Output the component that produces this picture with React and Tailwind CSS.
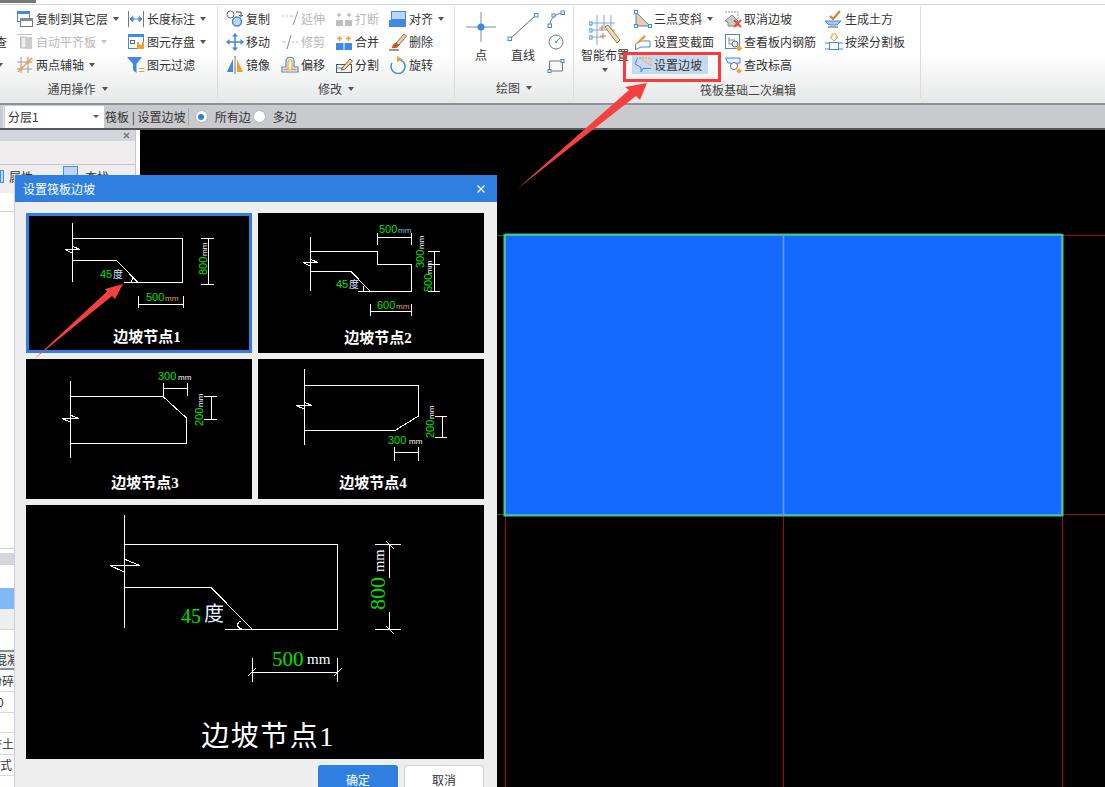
const cn = "font-['Noto_Sans_CJK_SC',sans-serif]";
const blue = "#3f8ae0";
const orange = "#f0a033";
const gray = "#bdbdbd";

const Caret = ({ light }) => (
  <span
    className={`ml-[5px] w-0 h-0 border-x-[3px] border-x-transparent border-t-[4px] ${
      light ? "border-t-[#c4c4c4]" : "border-t-[#555]"
    }`}
  />
);

const Ico = ({ children, w = 18, h = 18 }) => (
  <svg width={w} height={h} viewBox={`0 0 ${w} ${h}`} fill="none" className="shrink-0">
    {children}
  </svg>
);

const icons = {
  toLayer: (
    <Ico>
      <rect x="1.5" y="1.5" width="12" height="10" fill="#fff" stroke={blue} />
      <rect x="1" y="1" width="13" height="3" fill={blue} />
      <rect x="4.5" y="8.5" width="12" height="8" fill="#fff" stroke="#777" />
      <rect x="4" y="8" width="13" height="3" fill="#888" />
    </Ico>
  ),
  flush: (
    <Ico>
      <path d="M1 1.5h15M4.5 4v11M11 4v12" stroke={gray} />
      <rect x="5" y="4" width="5" height="11" fill="#eee" stroke={gray} />
      <rect x="11" y="4" width="5" height="12" fill="#ccc" />
    </Ico>
  ),
  axis: (
    <Ico>
      <path d="M1 6h15M1 13h15M5 1v16M12 1v16" stroke="#999" />
      <path d="M2 16 16 2" stroke={orange} strokeWidth="1.5" />
      <circle cx="5" cy="13" r="1.5" fill={orange} />
      <circle cx="12" cy="6" r="1.5" fill={orange} />
    </Ico>
  ),
  dim: (
    <Ico>
      <path d="M1.5 1v16M16.5 1v16" stroke="#777" />
      <path d="M3 9h12M3 9l3-2.5v5zM15 9l-3-2.5v5z" stroke={blue} fill={blue} />
    </Ico>
  ),
  save: (
    <Ico>
      <rect x="1.5" y="1.5" width="15" height="14" fill="#fff" stroke={blue} />
      <rect x="1" y="1" width="16" height="3" fill={blue} />
      <rect x="3.5" y="7.5" width="4" height="3" stroke="#666" />
      <rect x="10" y="9" width="7" height="7" fill={orange} />
      <rect x="12" y="9" width="3" height="2.5" fill="#fff" />
    </Ico>
  ),
  filter: (
    <Ico>
      <path d="M0 1h15L9.5 8v9L6 14V8z" fill={blue} />
      <path d="M12 12.5h5M12 15.5h5" stroke={orange} />
    </Ico>
  ),
  copy: (
    <Ico>
      <circle cx="4.5" cy="4.5" r="3.5" stroke="#666" />
      <circle cx="11" cy="11.5" r="4.5" fill="#bcd7f3" stroke={blue} strokeWidth="1.5" />
      <path d="M10 2h5v4M13 5l2 1.5L17 5" stroke="#444" />
    </Ico>
  ),
  move: (
    <Ico>
      <path d="M9 2v14M2 9h14" stroke={blue} strokeWidth="1.5" />
      <path d="M9 0l3 3.5H6zM9 18l3-3.5H6zM0 9l3.5-3v6zM18 9l-3.5-3v6z" fill={blue} />
    </Ico>
  ),
  mirror: (
    <Ico>
      <path d="M1 16 7 3v13z" fill={blue} />
      <path d="M11 3v13h6z" fill={orange} />
      <path d="M9 0v18" stroke="#777" />
    </Ico>
  ),
  extend: (
    <Ico>
      <path d="M1 6h2M5 6h2M9 6h3" stroke={gray} />
      <path d="M12 15 17 1" stroke="#999" />
    </Ico>
  ),
  trim: (
    <Ico>
      <path d="M1 9h4M11 9h2M15 9h2" stroke={gray} />
      <path d="M6 16 10 2" stroke="#888" />
    </Ico>
  ),
  offset: (
    <Ico>
      <path d="M1 16v-5h4V5c0-5 8-5 8 0v6h4v5z" fill="#fff" stroke={blue} strokeWidth="1.2" />
      <path d="M3 14v-1h4V6c0-3 4-3 4 0v7h4v1z" fill="#fdf2dc" stroke={orange} strokeWidth="1.2" />
    </Ico>
  ),
  breakIt: (
    <Ico>
      <rect x="1" y="10" width="7" height="6" fill={gray} />
      <rect x="10" y="10" width="7" height="6" fill={gray} />
      <path d="M4 3v4M2 5h4M14 3v4M12 5h4" stroke={gray} strokeWidth="1.5" />
    </Ico>
  ),
  merge: (
    <Ico>
      <rect x="1" y="10" width="16" height="7" fill={blue} />
      <path d="M9 10v7" stroke="#fff" />
      <path d="M4.5 3v5M2 5.5h5M13.5 3v5M11 5.5h5" stroke={orange} strokeWidth="1.5" />
    </Ico>
  ),
  split: (
    <Ico>
      <rect x="1.5" y="8.5" width="15" height="8" stroke="#555" />
      <path d="M1 12h6" stroke={blue} />
      <path d="M7 12 15 3l2.5 2-8 8.5-3 .5z" fill="#f2dcae" stroke="#6a5a3a" />
    </Ico>
  ),
  align: (
    <Ico>
      <rect x="2.5" y="1.5" width="14" height="8" fill="#bcd7f3" stroke={blue} />
      <rect x="0" y="10" width="17" height="7" fill={blue} />
    </Ico>
  ),
  erase: (
    <Ico>
      <path d="M0 17h10" stroke="#333" />
      <path d="M7 10 15 1l2.5 2L10 12z" fill="#e8cfa0" stroke="#8a7a5a" />
      <path d="M3 15c0-3 2-5 4-5l3 2c0 2-3 4-7 3z" fill="#c8552a" />
    </Ico>
  ),
  rotate: (
    <Ico>
      <path d="M9 3.5a7 7 0 1 1-6 3.5" stroke={blue} strokeWidth="1.5" />
      <path d="M8 0v6l6-2.5z" fill={orange} />
    </Ico>
  ),
  pointBig: (
    <Ico w={30} h={30}>
      <path d="M15 0v30M0 15h30" stroke="#888" />
      <circle cx="15" cy="15" r="3.5" fill={blue} />
    </Ico>
  ),
  lineBig: (
    <Ico w={32} h={30}>
      <path d="M3 27 29 3" stroke="#666" />
      <rect x="1" y="25" width="3.5" height="3.5" fill="#fff" stroke={blue} />
      <rect x="27.5" y="1.5" width="3.5" height="3.5" fill="#fff" stroke={blue} />
    </Ico>
  ),
  arc: (
    <Ico>
      <path d="M3 15C3 9 8 4 15 3" stroke="#777" />
      <rect x="1" y="14" width="3.5" height="3.5" fill="#fff" stroke={blue} />
      <rect x="5" y="4" width="3" height="3" fill="#fff" stroke={blue} />
      <rect x="14" y="1" width="3.5" height="3.5" fill="#fff" stroke={blue} />
    </Ico>
  ),
  circle: (
    <Ico>
      <circle cx="9" cy="9" r="7" stroke="#777" />
      <circle cx="9" cy="9" r="1" fill={blue} />
      <path d="M9 9l4-4" stroke={blue} />
    </Ico>
  ),
  rect: (
    <Ico>
      <path d="M2.5 5h13v10h-13z" stroke="#777" />
      <rect x="1" y="13.5" width="3" height="3" fill="#fff" stroke={blue} />
      <rect x="14" y="3.5" width="3" height="3" fill="#fff" stroke={blue} />
    </Ico>
  ),
  smart: (
    <Ico w={32} h={32}>
      <path d="M0 9h26M0 16h26M0 23h14M8 1v30M15 1v12M22 1v16" stroke="#7aa8dc" />
      <rect x="0" y="8" width="3" height="3" fill="#fff" stroke={blue} />
      <rect x="0" y="15" width="3" height="3" fill="#fff" stroke={blue} />
      <rect x="0" y="22" width="3" height="3" fill="#fff" stroke={blue} />
      <path d="M16 13l3-2 12 15-3 3z" fill="#f2dcae" stroke="#8a7a5a" />
      <path d="M13 11v6M10 14h6M11 22h6M14 19v6" stroke="#e8703a" />
    </Ico>
  ),
  threePoint: (
    <Ico>
      <path d="M2 2v14h14z" fill="#f6c9a6" stroke={blue} />
      <rect x="0.5" y="0.5" width="3" height="3" fill="#fff" stroke={blue} />
      <rect x="0.5" y="14.5" width="3" height="3" fill="#fff" stroke={blue} />
      <rect x="14.5" y="14.5" width="3" height="3" fill="#fff" stroke={blue} />
    </Ico>
  ),
  section: (
    <Ico>
      <path d="M1.5 11 7 8h9v6H7l-5.500 2.500z" fill="#fff" stroke={blue} />
      <path d="M3 9 10 2l2 2-7 6-3 1z" fill={orange} />
    </Ico>
  ),
  slope: (
    <Ico>
      <path d="M3.500 2 1 8l6 3.500V16M7 16 9 12.500H17" stroke={blue} />
      <path d="M5 2h12v9M6 2l10 7" stroke={orange} strokeDasharray="2 1" />
    </Ico>
  ),
  cancelSlope: (
    <Ico>
      <path d="M1 2h13v7" stroke="#999" strokeDasharray="2 1" />
      <path d="M1 11 8 5l6 6v5H4v-4z" fill="#ccc" stroke="#888" />
      <path d="M10 10l7 7M17 10l-7 7" stroke="#e2503a" strokeWidth="2" />
    </Ico>
  ),
  rebar: (
    <Ico>
      <rect x="1.500" y="1.500" width="14" height="14" fill="#fff" stroke={blue} />
      <path d="M5 4v7h5M5 7h6" stroke="#888" />
      <circle cx="11" cy="11" r="3" fill="#dbe9f8" stroke="#666" />
      <rect x="13" y="13" width="4.500" height="4.500" fill={orange} transform="rotate(45 15 15)" />
    </Ico>
  ),
  elev: (
    <Ico>
      <path d="M1.500 2H16v5h-3v3H7V7H4z" fill="#e8eef6" stroke={blue} />
      <circle cx="10" cy="10" r="3.500" fill="#fff" stroke="#666" />
      <rect x="13" y="13" width="4" height="4" fill={orange} transform="rotate(45 15 15)" />
    </Ico>
  ),
  earth: (
    <Ico>
      <path d="M5 6l3 3 7-8" stroke="#e8742a" strokeWidth="2" />
      <path d="M0 11h16l-4 4H4z" fill="#a9c8ec" stroke={blue} />
      <path d="M3 17h10" stroke="#555" />
    </Ico>
  ),
  beamSplit: (
    <Ico>
      <path d="M7 1h4v3h2L9 8 5 4h2z" fill="#fff" stroke={orange} />
      <rect x="4.500" y="9.500" width="9" height="7" fill="#fff" stroke={blue} />
      <path d="M0 10h4M14 10h4M0 16h4M14 16h4" stroke={blue} />
    </Ico>
  ),
};

const Item = ({ icon, label, caret, off, active }) => (
  <div className="h-[23px] flex items-center">
    <div
      className={`flex items-center gap-[2px] h-[19px] ${
        active ? "bg-[#c5d9f0] -ml-[2px] pl-[2px] w-[76px]" : ""
      }`}
    >
      {icons[icon]}
      <span className={`text-[12px] leading-none whitespace-nowrap ${off ? "text-[#b8b8b8]" : "text-[#333]"}`}>
        {label}
      </span>
    </div>
    {caret && <Caret light={off} />}
  </div>
);

const GroupLabel = ({ text, caret, className = "" }) => (
  <div className={`flex items-center justify-center h-[20px] text-[12px] leading-none text-[#444] ${className}`}>
    {text}
    {caret && <span className="w-[1px]" />}
    {caret && <Caret />}
  </div>
);

const Ribbon = () => (
  <div className="flex h-[98px] bg-gradient-to-b from-white from-50% to-[#e6e7e8]">
    <div className="w-[218px] flex flex-col border-r border-r-[#dcdcdc] mt-[1px] mb-[5px]">
      <div className="grid grid-cols-[16px_111px_auto] h-[69px] pt-[1px]">
        <div className="h-[23px] flex items-center text-[12px] text-[#333] invisible">.</div>
        <Item icon="toLayer" label="复制到其它层" caret />
        <Item icon="dim" label="长度标注" caret />
        <div className="h-[23px] flex items-center overflow-hidden w-[7px] justify-end text-[12px] text-[#333]">
          <span className="shrink-0">查</span>
        </div>
        <Item icon="flush" label="自动平齐板" caret off />
        <Item icon="save" label="图元存盘" caret />
        <div className="h-[23px] flex items-center">
          <span className="w-0 h-0 -ml-[3px] border-x-[3px] border-x-transparent border-t-[4px] border-t-[#555]" />
        </div>
        <Item icon="axis" label="两点辅轴" caret />
        <Item icon="filter" label="图元过滤" />
      </div>
      <GroupLabel text="通用操作" caret className="mr-[62px] mt-[4px]" />
    </div>

    <div className="w-[237px] flex flex-col border-r border-r-[#dcdcdc] mt-[1px] mb-[5px]">
      <div className="grid grid-cols-[55px_54px_54px_auto] pl-[8px] h-[69px] pt-[1px]">
        <Item icon="copy" label="复制" />
        <Item icon="extend" label="延伸" off />
        <Item icon="breakIt" label="打断" off />
        <Item icon="align" label="对齐" caret />
        <Item icon="move" label="移动" />
        <Item icon="trim" label="修剪" off />
        <Item icon="merge" label="合并" />
        <Item icon="erase" label="删除" />
        <Item icon="mirror" label="镜像" />
        <Item icon="offset" label="偏移" />
        <Item icon="split" label="分割" />
        <Item icon="rotate" label="旋转" />
      </div>
      <GroupLabel text="修改" caret className="mt-[4px]" />
    </div>

    <div className="w-[119px] flex flex-col border-r border-r-[#dcdcdc] mt-[1px] mb-[5px]">
      <div className="flex pl-[11px] h-[69px] pt-[6px]">
        <div className="w-[30px] flex flex-col items-center gap-[7px]">
          {icons.pointBig}
          <span className="text-[12px] leading-none text-[#333]">点</span>
        </div>
        <div className="w-[32px] ml-[11px] flex flex-col items-center gap-[7px]">
          {icons.lineBig}
          <span className="text-[12px] leading-none text-[#333]">直线</span>
        </div>
        <div className="ml-[8px] -mt-[2px] flex flex-col gap-[5px]">
          {icons.arc}
          {icons.circle}
          {icons.rect}
        </div>
      </div>
      <GroupLabel text="绘图" caret className="mt-[4px]" />
    </div>

    <div className="w-[347px] flex flex-col border-r border-r-[#dcdcdc] mt-[1px] mb-[5px]">
      <div className="flex h-[70px]">
        <div className="w-[60px] pl-[2px] flex flex-col items-center pt-[8px]">
          {icons.smart}
          <span className="text-[12px] leading-none text-[#333] mt-[3px] whitespace-nowrap">智能布置</span>
          <span className="mt-[7px] w-0 h-0 border-x-[3px] border-x-transparent border-t-[4px] border-t-[#555]" />
        </div>
        <div className="grid grid-cols-[90px_101px_auto] grid-rows-[23px_23px_23px] pt-[1px]">
          <Item icon="threePoint" label="三点变斜" caret />
          <Item icon="cancelSlope" label="取消边坡" />
          <Item icon="earth" label="生成土方" />
          <Item icon="section" label="设置变截面" />
          <Item icon="rebar" label="查看板内钢筋" />
          <Item icon="beamSplit" label="按梁分割板" />
          <Item icon="slope" label="设置边坡" active />
          <Item icon="elev" label="查改标高" />
        </div>
      </div>
      <GroupLabel text="筏板基础二次编辑" className="mt-[6px] ml-[2px]" />
    </div>
  </div>
);

const Radio = ({ on }) => (
  <span className="w-[13px] h-[13px] rounded-full bg-white border border-[#b4b4b4] flex items-center justify-center shrink-0">
    {on && <span className="w-[6px] h-[6px] rounded-full bg-[#2e7fe0]" />}
  </span>
);

const OptionsBar = () => (
  <div className="h-[27px] bg-[#c8cacd] border-y-2 border-t-[#8f9194] border-b-[#55575a] flex items-center text-[12px] text-[#333] leading-none">
    <span className="w-[1px] h-[22px] bg-[#e8e8e8] ml-[3px]" />
    <div className="ml-[1px] w-[99px] h-[22px] bg-white flex items-center justify-between pl-[3px] pr-[5px]">
      分层1
      <span className="w-0 h-0 border-x-[3px] border-x-transparent border-t-[3px] border-t-[#555]" />
    </div>
    <span className="ml-[1px] whitespace-nowrap">筏板 | 设置边坡</span>
    <span className="w-[1px] h-[18px] bg-[#a8aaad] ml-[2px]" />
    <span className="ml-[6px]"><Radio on /></span>
    <span className="ml-[7px] whitespace-nowrap">所有边</span>
    <span className="ml-[2px]"><Radio /></span>
    <span className="ml-[7px] whitespace-nowrap">多边</span>
  </div>
);

const LeftPanel = () => (
  <div className="w-[140px] bg-white flex flex-col text-[12px] text-[#333] shrink-0 overflow-hidden">
    <div className="h-[11px] w-[136px] bg-[#d4d5da] flex items-center justify-end pr-[5px] border-r border-r-[#c4c6c9]">
      <svg width="7" height="7" viewBox="0 0 7 7">
        <path d="M1 1l5 5M6 1l-5 5" stroke="#777" strokeWidth="1.500" />
      </svg>
    </div>
    <div className="h-[24px] w-[136px] bg-[#efeded] border-b border-[#c4c6c9] border-r border-r-[#c4c6c9]" />
    <div className="h-[28px] w-[136px] bg-[#efeded] border-r border-r-[#c4c6c9] flex items-start pt-[6px]">
      <span className="w-[4px] h-[13px] -mt-[1px] bg-[#bcd7f3] border border-[#4a8fdc]" />
      <span className="ml-[5px] leading-none">属性</span>
      <span className="ml-[30px] -mt-[5px] w-[15px] h-[13px] bg-[#bcd7f3] border border-[#4a8fdc]" />
      <span className="ml-[7px] leading-none">查找</span>
    </div>
    <div className="h-[19px] border-b border-[#d0d0d0]" />
    <div className="h-[337px] border-b border-[#d0d0d0]" />
    <div className="h-[4px]" />
    <div className="h-[12px] bg-[#d5d6da]" />
    <div className="h-[23px]" />
    <div className="h-[21px] bg-[#80b8f5]" />
    <div className="h-[21px] bg-[#eeeeee] border-b border-[#d8d8d8]" />
    <div className="h-[20px]" />
    <div className="h-[20px] bg-[#eeeeee] border-y-2 border-[#8e8e8e] overflow-hidden leading-[16px] whitespace-nowrap -ml-[5px]">混凝</div>
    <div className="h-[22px] border-b border-[#d8d8d8] leading-[21px] whitespace-nowrap -ml-[10px]">粉碎</div>
    <div className="h-[21px] border-b border-[#d8d8d8] leading-[20px] -ml-[3px]">0</div>
    <div className="h-[20px] border-b border-[#d8d8d8]" />
    <div className="h-[22px] border-b border-[#d8d8d8] leading-[21px] whitespace-nowrap -ml-[10px]">夯土</div>
    <div className="h-[21px] border-b border-[#d8d8d8] leading-[20px]">式</div>
  </div>
);

const Canvas = () => (
  <div className="flex-1 bg-black overflow-hidden">
    <svg width="965" height="657" viewBox="140 130 965 657" className="block">
      <path
        d="M1062 235.500H1105M1062 514.500H1105M505.500 515V787M783.500 515V787M1062.500 515V787"
        stroke="#a8001a"
        shapeRendering="crispEdges"
      />
      <path d="M497 235.500H505M497 514.500H505M505 233.500H1062" stroke="#0a6a1e" shapeRendering="crispEdges" />
      <rect x="503.500" y="234" width="560" height="282.500" fill="#36d85e" />
      <rect x="505.500" y="235.500" width="556" height="279" fill="#1469ff" stroke="#5d97ff" />
      <path d="M783.500 236V514" stroke="#6a9fff" strokeWidth="1.500" />
    </svg>
  </div>
);

const W = ({ d, c = "#fff" }) => <path d={d} stroke={c} fill="none" shapeRendering="crispEdges" />;

const T = ({ x, y, s = 11, c = "#00e000", rot, serif, children }) => (
  <text
    x={x}
    y={y}
    fontSize={s}
    fill={c}
    transform={rot ? `rotate(-90 ${x} ${y})` : undefined}
    className={serif ? "font-['Liberation_Serif','Noto_Sans_CJK_SC',serif]" : "font-['Liberation_Sans','Noto_Sans_CJK_SC',sans-serif]"}
  >
    {children}
  </text>
);

const Tile = ({ box, selected, className = "", children, title, tx, ty, ts = 15, thin }) => {
  const [x, y, w, h] = box;
  return (
    <div className={`bg-black ${selected ? "outline-[3px] outline-[#2e7fe0] -outline-offset-3" : ""} ${className}`}>
      <svg width={w} height={h} viewBox={`${x} ${y} ${w} ${h}`} className="block">
        {children}
        <text
          x={tx}
          y={ty}
          fontSize={ts}
          fontWeight={thin ? 400 : 700}
          letterSpacing={thin ? 1.5 : 0}
          fill="#fff"
          textAnchor="middle"
          className="font-['Liberation_Serif','Noto_Sans_CJK_SC',serif]"
        >
          {title}
        </text>
      </svg>
    </div>
  );
};

const Dialog = () => (
  <div className="absolute left-[14px] top-[175px] w-[483px] h-[612px] bg-[#eeeeee] border-l border-l-[#c5d0e5] overflow-hidden">
    <div className="h-[27px] bg-[#2e7fe0] flex items-center justify-between pl-[8px] pr-[12px] text-white text-[12px] leading-none">
      设置筏板边坡
      <svg width="8" height="8" viewBox="0 0 8 8">
        <path d="M0.500 0.500l7 7M7.500 0.500l-7 7" stroke="#fff" strokeWidth="1.200" />
      </svg>
    </div>
    <div className="pl-[11px] pt-[11px] w-[469px]">
      <div className="grid grid-cols-[226px_226px] grid-rows-[140px_140px] gap-[6px]">
        <Tile box={[26, 213, 226, 140]} selected title="边坡节点1" tx={147} ty={342}>
          <W d="M72.500 223V282M72.500 238.500H182.500V282.500H124M72.500 260.500H116.500L138 282.500" />
          <W d="M65 249.500H80M65 249.500L72 253M72 246L80 249.500M131 282L133 278L137 282" />
          <W d="M201 238.500H214M201 284.500H214M208.500 238V284" />
          <W d="M138.500 296V308M183.500 296V308M138 304.500H183" />
          <T x={100} y={278}>45</T>
          <T x={113} y={278} s={10} c="#dfe8ff">度</T>
          <T x={146} y={301}>500</T>
          <T x={165} y={301} s={8} c="#e0a050">mm</T>
          <T x={207} y={275} rot>800</T>
          <T x={207} y={256} s={8} c="#fff" rot>mm</T>
        </Tile>
        <Tile box={[258, 213, 226, 140]} title="边坡节点2" tx={378} ty={343}>
          <W d="M310.500 237V291M310.500 251.500H377.500V264.500H411.500V291.500H358M310.500 271.500H351L370 291" />
          <W d="M303 262.500H318M303 262.500L310 266M310 259L318 262.500M363 291V286" />
          <W d="M377.500 233V245M411.500 233V245M377 237.500H411" />
          <W d="M428 251.500H440M428 264.500H440M428 291.500H440M434.500 251V292" />
          <W d="M370.500 304V316M411.500 304V316M370 311.500H411" />
          <T x={379} y={233}>500</T>
          <T x={398} y={233} s={8} c="#7ec0ff">mm</T>
          <T x={377} y={309}>600</T>
          <T x={396} y={309} s={8} c="#e0a050">mm</T>
          <T x={336} y={288}>45</T>
          <T x={349} y={288} s={10} c="#dfe8ff">度</T>
          <T x={424} y={268} rot>300</T>
          <T x={424} y={249} s={8} c="#fff" rot>mm</T>
          <T x={432} y={292} rot>500</T>
          <T x={432} y={274} s={8} c="#fff" rot>mm</T>
        </Tile>
        <Tile box={[26, 359, 226, 140]} title="边坡节点3" tx={145} ty={488}>
          <W d="M70.500 381V458M70.500 396.500H163L186.500 418V443.500H70.500" />
          <W d="M62 418.500H79M62 418.500L70 422M70 415L79 418.500" />
          <W d="M163.500 383V396M187.500 383V396M163 388.500H187" />
          <W d="M204 396.500H217M204 419.500H217M211.500 396V419" />
          <T x={158} y={380}>300</T>
          <T x={178} y={380} s={8} c="#fff">mm</T>
          <T x={203} y={426} rot>200</T>
          <T x={203} y={407} s={8} c="#fff" rot>mm</T>
        </Tile>
        <Tile box={[258, 359, 226, 140]} title="边坡节点4" tx={373} ty={488}>
          <W d="M304.500 369V445M304.500 385.500H418.500V416L395 430.500H304.500" />
          <W d="M296 405.500H312M296 405.500L304 409M304 402L312 405.500" />
          <W d="M435 416.500H447M435 437.500H447M442.500 416V437" />
          <W d="M394.500 447V461M418.500 447V461M394 452.500H418" />
          <T x={388} y={444}>300</T>
          <T x={409} y={444} s={8} c="#fff">mm</T>
          <T x={434} y={438} rot>200</T>
          <T x={434} y={419} s={8} c="#fff" rot>mm</T>
        </Tile>
      </div>
      <Tile box={[26, 505, 458, 254]} className="mt-[6px]" title="边坡节点1" tx={268} ty={746} ts={28} thin>
        <W d="M124.500 515V628M124.500 544.500H337.500V629.500H225M124.500 587.500H211L252 629" />
        <W d="M110 565.500H140M110 565.500L124 572M124 559L140 565.500M242 629C236 628 237 622 241 621" />
        <W d="M375 544.500H401M375 629.500H401M389.500 544V578M389.500 612V629M386 541L394 549M386 626L394 634" />
        <W d="M252.500 658V682M337.500 658V682M252 672.500H338M248 676L256 668M334 676L342 668" />
        <T x={181} y={623} s={20} serif>45</T>
        <T x={204} y={621} s={20} c="#e8f0ff" serif>度</T>
        <T x={272} y={666} s={21} serif>500</T>
        <T x={307} y={664} s={15} c="#fff" serif>mm</T>
        <T x={385} y={610} s={22} serif rot>800</T>
        <T x={384} y={572} s={14.500} c="#fff" serif rot>mm</T>
      </Tile>
      <div className="flex justify-end gap-[6px] mt-[6px] text-[12px]">
        <div className="w-[80px] h-[30px] rounded-[3px] bg-[#2e7fe0] text-white flex items-center justify-center">确定</div>
        <div className="w-[80px] h-[30px] rounded-[3px] bg-white border border-[#d0d0d0] text-[#333] flex items-center justify-center">取消</div>
      </div>
    </div>
  </div>
);

export default function App() {
  return (
    <div className={`relative w-[1105px] h-[787px] overflow-hidden bg-white flex flex-col ${cn}`}>
      <div className="h-[5px] bg-white border-b border-[#d6d6d6] shrink-0 overflow-hidden">
        <div className="w-[36px] h-[3px] bg-[#777]" />
      </div>
      <Ribbon />
      <OptionsBar />
      <div className="flex flex-1 min-h-0">
        <LeftPanel />
        <Canvas />
      </div>
      <Dialog />
      {/* red annotations on top of the screenshot */}
      <div className="absolute left-[623px] top-[52px] w-[98px] h-[30px] border-[3px] border-[#fb3a3a]" />
      <svg className="absolute left-0 top-0 pointer-events-none" width="1105" height="787">
        <polygon points="517,189 629,90 625,87 647,83 640,100 636,96" fill="#f6403f" />
        <polygon points="33,360 107,291.500 105,289 123,284 115,299 112,296" fill="#f6403f" />
      </svg>
    </div>
  );
}
